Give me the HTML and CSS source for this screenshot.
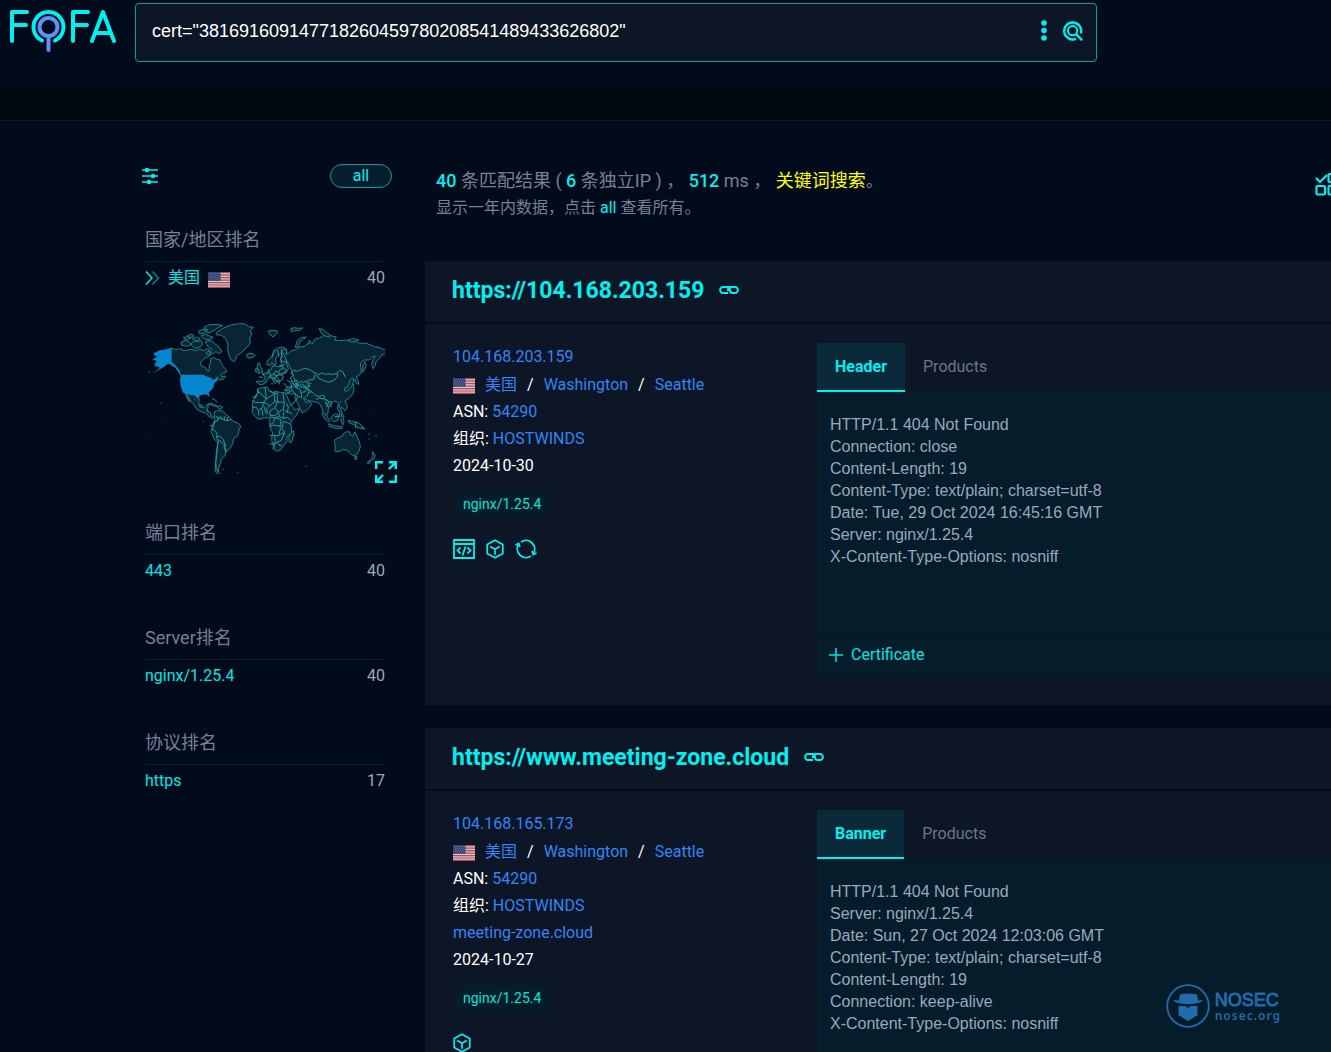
FILE: index.html
```html
<!DOCTYPE html>
<html lang="zh-CN">
<head>
  <meta charset="UTF-8">
  <meta name="viewport" content="width=device-width, initial-scale=1.0">
  <title>FOFA Search</title>
  <link rel="stylesheet" href="styles.css">
</head>
<body>
  <!-- shared icons -->
  <svg class="sprite" aria-hidden="true">
    <symbol id="flag-us" viewBox="0 0 22 16">
      <rect width="22" height="16" fill="#e9dfe4"/>
      <path d="M0 .6h22M0 3.1h22M0 5.6h22M0 8.1h22M0 10.6h22M0 13h22M0 15.4h22" stroke="#c1505c" stroke-width="1.2"/>
      <rect width="12.5" height="8.7" fill="#3c4a7c"/>
      <path d="M1 1.6h11M2 3.4h10M1 5.2h11M2 7h10" stroke="#8790b3" stroke-width=".7" stroke-dasharray="1 1"/>
    </symbol>
    <symbol id="icon-link" viewBox="0 0 20 10">
      <path d="M9 8H4a2.800 2.800 0 0 1-2.800-3A2.800 2.800 0 0 1 4 2h4.500Q11 2 11 5t2.500 3H16a2.800 2.800 0 0 0 2.800-3A2.800 2.800 0 0 0 16 2h-4.500Q9 2 9 5v1" fill="none" stroke="currentColor" stroke-width="2"/>
    </symbol>
    <symbol id="icon-cube" viewBox="0 0 18 20">
      <path d="M9 1.200l7.800 4.400v8.800L9 18.800l-7.800-4.400V5.600zM4.200 7.400L9 10.200l4.800-2.800M9 10.200v5.600" fill="none" stroke="currentColor" stroke-width="1.700"/>
    </symbol>
  </svg>

  <header class="header">
    <a class="logo" href="#" aria-label="FOFA">
      <svg width="108" height="44" viewBox="0 0 108 44" fill="none" stroke="#00f0f0" stroke-width="4" stroke-linecap="round" stroke-linejoin="round">
        <path d="M19 4H4v29M4 17h14"/>
        <path d="M34 32.500a15 15 0 1 1 13 0"/>
        <path d="M80 4H65v29M65 17h14"/>
        <path d="M84 33L95 4l11 29M88 25h14"/>
        <g stroke="#5b93f7"><circle cx="40.500" cy="19" r="9"/><path d="M40.500 28v14"/></g>
      </svg>
    </a>
    <form class="search">
      <input type="text" aria-label="Search query" value='cert="381691609147718260459780208541489433626802"'>
      <button type="button" class="icon-btn" aria-label="More options">
        <svg width="6" height="22" viewBox="0 0 6 22" fill="currentColor"><circle cx="3" cy="3" r="2.800"/><circle cx="3" cy="10.500" r="2.800"/><circle cx="3" cy="18" r="2.800"/></svg>
      </button>
      <button type="submit" class="icon-btn" aria-label="Search">
        <svg width="20" height="20" viewBox="0 0 20 20" fill="none" stroke="currentColor" stroke-width="2.400"><path d="M13 17.800A8.500 8.500 0 1 1 17.800 12.500"/><circle cx="9.600" cy="9.700" r="4.600" stroke-width="2"/><path d="M12.600 12.700l6.600 6.600"/></svg>
      </button>
    </form>
  </header>
  <div class="subbar"></div>

  <main class="main">
    <aside class="sidebar">
      <div class="filters">
        <button type="button" class="icon-btn" aria-label="Filters">
          <svg width="18" height="18" viewBox="0 0 18 18" stroke="currentColor" stroke-width="1.600" fill="currentColor"><path d="M1 3h16M1 9h16M1 15h16"/><g stroke="none"><circle cx="6" cy="3" r="2.300"/><circle cx="12" cy="9" r="2.300"/><circle cx="8" cy="15" r="2.300"/></g></svg>
        </button>
        <button type="button" class="all-btn">all</button>
      </div>

      <section class="rank">
        <h2>国家/地区排名</h2>
        <div class="rank-row">
          <a href="#">
            <svg class="chevrons" width="15" height="16" viewBox="0 0 15 16" fill="none" stroke="currentColor" stroke-width="1.500"><path d="M1 1.500L7 8l-6 6.500"/><path opacity=".55" d="M7.500 1.500l6 6.500-6 6.500"/></svg>
            美国
            <svg class="flag" width="22" height="16"><use href="#flag-us"/></svg>
          </a>
          <span>40</span>
        </div>
        <div class="map">
          <svg class="world" viewBox="15 36 720 456" role="img" aria-label="World map">
            <g class="land">
              <!-- North America -->
              <path d="M93 114l14 5 12-3 14 6 20-4 14 4 13-5 12 6 7-7 9 3-3 9 8 6-10 7-13 7-10 11 3 9 13 4 8 13 5-8-2-11 5-8-1-12 12-3 8 7 6-3 5 9 6 12 8 8 4 9-11 5-7 4 3 6 12-2-5 7-12 6-4-5-9 9-15 5-11-10-9-2H125l-3-12-8-14-9-12-12-4z"/>
              <path d="M139 249l14 4 12 2 7 9 6 2-2 12 4 13 11 3 7-7 8 1-5 9 1 8 9 1 1 10 9 4-3 5-11-6-10-10-13-4-14-8-11-16-9-11-4-10-6-8 5 14 5 10-8-8-6-18z"/>
              <path d="M202 283l10-3 14 5 7 4-11-1-9-4zM232 290l9-3 8 5-8 5-9-4z"/>
              <path d="M124 96l12-5 12 5 6 8-12 5-17-3zM130 83l14-3 9 5-14 5zM142 77l12-5 8 6-11 5zM152 102l10-9 14 2 8-3 4 12-10 8-15 3zM156 86l16-5 9 6-12 6zM176 63l14-5 9 5-8 7-13 1zM183 77l15-4 10 5 12 4-12 7-18-3zM192 52l15-7 22-2 19 3-13 7-13 8-11 7-12-1 4-9-10 1zM195 96l11-5 10 3 9 8 12 9 9 13-8 7-11-6-8 7-10-5 7-9-10-6zM198 127l11-3 3 7-10 4z"/>
              <path d="M229 68l18-12 25-11 27-4 18 1 8 8 16 2-10 9 4 12-6 11 2 15-7 10-10 8-7 9-15 10-9 19-9-5-8-16-3-19 1-12-7-18-13-9-16-2z"/>
              <path d="M318 135l9-5 13 1 5 6-8 6-13 1zM216 266l8 2 8 9M164 265l2 6"/>
              <!-- South America -->
              <path d="M222 307l11-6 14 2 10 9 14 12 7 9 18 8 6 7-6 15-3 15-12 7-3 16-10 17-11 8-2 11-11 10-3 14-5 13-2 11 9 9-9 1-9-12 3-28 3-26 2-33-10-8-10-23 3-13 7-8 2-16z"/>
              <!-- Africa -->
              <path d="M352 237l16-4 15-1 3 9 13 6 10-4 12 5 14-1 5 10 9 20 9 13 5 9 16-3-9 19-12 13-6 12 3 17-1 12-13 11-1 15-9 11-8 13-11 4-7-2-5-15-5-14 1-12 2-12-7-13-2-12 1-15-8-5-13 1-14 4-10-9-9-12 2-13-1-14 7-15 9-16z"/>
              <path d="M461 362l1 10-8 26-6-2-2-13 6-12z"/>
              <!-- Europe -->
              <path d="M348 214h20l8-10-4-7-6-5 11-3 7-8 10-3 2-8 9-3 9 3 15-2 3-8 7-2-2-15 4-12-2-14-12-6-15 3-10 11-8 16-12 12-1 11 10 3 6-10 3 9 8-4-1-16 8-10 7-7 5 9-7 14 9 3 10-1 6 23-8 12-13 1-9 6-7 2 10 12-5 5-13-14-10 2-7 6-8 10-9 5-10-2z"/>
              <path d="M352 163l6-5 3 12 5 7 2 9-14 4 4-8-6-8zM345 178l6-3 3 7-6 5zM393 221l7 1M376 211l3 7"/>
              <!-- Asia -->
              <path d="M424 119l9-2 8 8-5 7 9-1 8-9 12-2 14-9 17-2 5-8 7 1-1-12 10 12 7-14 15-4 12-7 20 0 18 4-5 10 16 1 17-2 16 5 16-1 10 7 17-2 16 6 14 6 18 4 14 6 9 6-11 4-11 4-7 10-9 9-5 16-5 6-4-12 4-14 7-12-9 2-9 10-16 0-10 9-1 13 3 9-5 14-11 6 6 11 3 11-8-3-3-10-10-4-5 9 10 9 1 17-6 14-12 12-10 6 8 13-1 10-7 6-6-9-6 1 1 13 9 13-4 2-9-12-1-21-6-13-8-3-9 8-10 13-1 15-7 13-9-18-4-14-6-10-15-5-19-3-14-8 8 14 12-3 5 6-6 11-12 11-11 5-6-11-7-18-9-16 4-13-14 3-11-4-6-9 5-9 19-2 13 2-4-13-8-11-3-17z"/>
              <path d="M466 112l6-20 12-9 15-2-9 7-10 7-5 15zM385 63l14-2 12 2 1 6-13 12-9-7zM452 57l10-4 12 2 14-1-9 7-15 1-9 3zM537 56l12 2 7 7 15 10-4 6-12-3-11-9zM626 89l13-3 17 4-8 5-16 1zM668 170l6-15 5 9-6 16-7 8zM612 235l9-3 5-10 5-14 8-4 2 9-5 14-9 12-11 6z"/>
              <!-- Oceania -->
              <path d="M549 307l8 8 13 17-4 4-12-10-8-15zM566 341l15 6 26 3-1 6-22-2-17-5zM575 319l12-8 11 6-6 16-12 2-7-7zM602 329l8-4 2 9-4 11zM624 331l13 3 17 4 11 8 8 11-13-3-9-1-8-9-15-5zM592 291l5-7 4 12 5 12-2 12-6-3 2-10-6-5zM601 279l1-6M664 348l10 7"/>
              <path d="M583 391l10-7 12-4 5-9 10-6 9 1 2 8 8 5 5-13 4 5 4 12 6 12 3 14-3 12-8 13-12 3-6-6-7-6-3-5-14-1-11 6-12-2 1-14zM643 440l8-1-3 11zM697 424l8 10-1 10-7 7-2-8 4-8zM693 449l-6 12-6-3z"/>
            </g>
            <g class="usa">
              <path d="M94 114v42l11 8 12 15 6 14-8-8-11-15-13-8-10 1-6 6-9 5-12 7-17 7 15-9 7-6-4-3-9-1-3-8 7-5-4-5-8-2 5-5 10-4-8-3-5-7 11-5 8-4 9-1z"/>
              <path d="M124 194h66l9 5 14 5 8 6 8-7 6-5-3 12-10 11-2 13-10 10-4 5 3 13-6-6-6-3-17 3-6 10-7-9-13-3-13-2-12-4-7-20-2-17z"/>
            </g>
            <!-- country borders -->
            <g class="borders">
              <path d="M209 348l10-3 1-9 12-3 3-10 9 2 13 7 16-2M232 333l4-10-8-4M220 345l-2 14 9 5 4 9-2 8 12-2 9 10 6 17-5 4 9 12M229 381l6 10-2 15-4 22-2 31 2 20 8 6M235 391l9 4 7 8 6 2M256 405l-2 12 4 10M242 318l3 10M253 319v12M263 321l-1 11"/>
              <path d="M352 237l5 9-13 13M337 262h11v-7l9-9 22 21-9 11-25-1-9-6M379 267l25-16v24l-14 12-11-7-9-2M375 233l4 34M388 243l16 8 2-5M406 251l6-3v28l-8-1M412 276l20 1M429 249l4 31M338 293l10-2 7 10 11-7 6-17M355 301l2 15M365 295l4 22M372 289l6 21M390 287l-10 10 2 16M412 276l-7 17-16 10 2 17M405 293l10 14-10 9-15 1M433 280l-3 19-14 7M430 299l12 8 3-16-6-11M442 307l8-1 6 8M416 307l2 13 11 5 2-18M429 325l14-3 9 10M418 320l-14 3-3 14-11 8M388 322h15M404 323l19 6-3 20-19-4-12 5M420 349l8 3 1-18M429 334l14 4 9 5M389 377h28l4-22 12 8-3 17M405 377v23l-7 18M388 402h17l7-6 12-5 5-14M412 396l8 12 7-2M420 375l8-7 8 5"/>
              <path d="M357 200l11 3M366 192l8 4M378 192l10-5-2-8M388 187l4 9-9 7M392 196l9-3 8 4-5 9-9 0M401 193l4-9 11 3 4-8M409 197l11-3 10 4-4 12-10 4 3 9M416 187l4 7M421 179l9-5-4-9-8 2M430 174l8 6-2 9-15 5M404 206l6 10 9-2M399 210l8 12M390 197l12 16M403 118l-7 25M412 120l5 20"/>
              <path d="M424 119l1 15-3 13 4 17M456 216l-4-12 6-8-5-7 7-8 13 3 12-6 12-3 14 5 11 8 8 1-6 6-2 12-17 4-14 6-7-3-8 4-9-9-5 8-7-4M532 195l15-6 9 4 12-2 9 3 14-4 2 9-10 11-16 7-16-5-15-7-6-9M591 190l8-8 9 2 8 18M441 211l12 7 2 13-10 5-5-7-8-9M455 231l1 10 12 14 13 7M456 218l13 8 2-7 8 7 7-5 9 8 14-2-8-9 13 2M469 226l-2 7 12 4 6 18-1 9M480 229l13 4 8 2 9-7M485 247l12-2 2-12 8 7-3 15-10 8M507 240l9 5 10 11 13 4 9-5 6 4-3 8-12-3-11 4M516 245l-7 3M551 267l8 2-2 13 9 1M559 269l7 6 8 0-3 11 5 6M566 276l-6 13 8 1M432 240l17 1M438 252l18-11M451 286l15-12 7-14M465 219l16 10M458 222l15 8M488 226l16 13"/>
              <path d="M647 335v19M584 320l14-1M166 197l2-3M189 289l-4 5M199 300l6-1M178 287l10-2"/>
            </g>
            <path class="isles" d="M61 278l4 3M61 328h1M31 367h1M25 387h1M24 186l5-1M188 334h4M248 478h4M291 487h4M497 469h4M665 353l8 5M687 370v5M686 386l4 2M706 378l5-1M711 108l4 2M643 300h1M694 315h1"/>
          </svg>
          <button type="button" class="icon-btn expand" aria-label="Expand map">
            <svg width="22" height="22" viewBox="0 0 22 22" fill="none" stroke="currentColor" stroke-width="2.400"><path d="M1.200 8V1.200H8M14 1.200h6.800V8M20.500 1.500L14 8M8 20.800H1.200V14M1.500 20.500L8 14M20.800 14v6.800H14"/></svg>
          </button>
        </div>
      </section>

      <section class="rank">
        <h2>端口排名</h2>
        <div class="rank-row"><a href="#">443</a><span>40</span></div>
      </section>
      <section class="rank">
        <h2>Server排名</h2>
        <div class="rank-row"><a href="#">nginx/1.25.4</a><span>40</span></div>
      </section>
      <section class="rank">
        <h2>协议排名</h2>
        <div class="rank-row"><a href="#">https</a><span>17</span></div>
      </section>
    </aside>

    <div class="results">
      <div class="summary">
        <div>
          <p class="total"><b>40</b> 条匹配结果 ( <b>6</b> 条独立IP ) ， <b>512</b> ms ， <a href="#">关键词搜索</a>。</p>
          <p class="hint">显示一年内数据，点击 <a href="#">all</a> 查看所有。</p>
        </div>
        <button type="button" class="icon-btn batch" aria-label="Select results">
          <svg width="24" height="24" viewBox="0 0 24 24" fill="none" stroke="currentColor" stroke-width="2.200"><path d="M1 6l4 4 7-7"/><rect x="13.500" y="2" width="8.500" height="8" rx="1"/><rect x="1.500" y="14" width="8.500" height="8.500" rx="1"/><rect x="13.500" y="14" width="8.500" height="8.500" rx="1"/></svg>
        </button>
      </div>

      <article class="card">
        <h3 class="card-title">
          <a href="#">https://104.168.203.159</a>
          <svg width="20" height="10"><use href="#icon-link"/></svg>
        </h3>
        <div class="card-body">
          <div class="info">
            <p><a href="#">104.168.203.159</a></p>
            <p class="place">
              <svg class="flag" width="22" height="16"><use href="#flag-us"/></svg>
              <a href="#">美国</a><span>/</span><a href="#">Washington</a><span>/</span><a href="#">Seattle</a>
            </p>
            <p>ASN: <a href="#">54290</a></p>
            <p>组织: <a href="#">HOSTWINDS</a></p>
            <p>2024-10-30</p>
            <a class="tag" href="#">nginx/1.25.4</a>
            <div class="actions">
              <button type="button" class="icon-btn" aria-label="Page source">
                <svg width="22" height="20" viewBox="0 0 22 20" fill="none" stroke="currentColor" stroke-width="1.800"><path d="M1 1h20v18H1zM1 5h20M7.500 8.500l-3 3 3 3M14.500 8.500l3 3-3 3M12.500 7.500l-3 9"/></svg>
              </button>
              <button type="button" class="icon-btn" aria-label="Products">
                <svg width="18" height="20"><use href="#icon-cube"/></svg>
              </button>
              <button type="button" class="icon-btn" aria-label="Refresh">
                <svg width="22" height="20" viewBox="0 0 22 20" fill="none" stroke="currentColor" stroke-width="1.800"><path d="M6 3A8.700 8.700 0 0 1 18.500 14.500M16 17A8.700 8.700 0 0 1 3.500 5.500"/><path d="M.5 6l3.200-1.500L5 8M21.500 14l-3.200 1.500L17 12"/></svg>
              </button>
            </div>
          </div>
          <div class="detail">
            <div class="tabs">
              <button type="button" class="tab active">Header</button>
              <button type="button" class="tab">Products</button>
            </div>
            <pre class="panel">HTTP/1.1 404 Not Found
Connection: close
Content-Length: 19
Content-Type: text/plain; charset=utf-8
Date: Tue, 29 Oct 2024 16:45:16 GMT
Server: nginx/1.25.4
X-Content-Type-Options: nosniff</pre>
            <button type="button" class="cert">
              <svg width="14" height="14" viewBox="0 0 14 14" stroke="currentColor" stroke-width="1.500"><path d="M7 0v14M0 7h14"/></svg>
              Certificate
            </button>
          </div>
        </div>
      </article>

      <article class="card">
        <h3 class="card-title">
          <a href="#">https://www.meeting-zone.cloud</a>
          <svg width="20" height="10"><use href="#icon-link"/></svg>
        </h3>
        <div class="card-body">
          <div class="info">
            <p><a href="#">104.168.165.173</a></p>
            <p class="place">
              <svg class="flag" width="22" height="16"><use href="#flag-us"/></svg>
              <a href="#">美国</a><span>/</span><a href="#">Washington</a><span>/</span><a href="#">Seattle</a>
            </p>
            <p>ASN: <a href="#">54290</a></p>
            <p>组织: <a href="#">HOSTWINDS</a></p>
            <p><a href="#">meeting-zone.cloud</a></p>
            <p>2024-10-27</p>
            <a class="tag" href="#">nginx/1.25.4</a>
            <div class="actions">
              <button type="button" class="icon-btn" aria-label="Products">
                <svg width="18" height="20"><use href="#icon-cube"/></svg>
              </button>
            </div>
          </div>
          <div class="detail">
            <div class="tabs">
              <button type="button" class="tab active">Banner</button>
              <button type="button" class="tab">Products</button>
            </div>
            <pre class="panel">HTTP/1.1 404 Not Found
Server: nginx/1.25.4
Date: Sun, 27 Oct 2024 12:03:06 GMT
Content-Type: text/plain; charset=utf-8
Content-Length: 19
Connection: keep-alive
X-Content-Type-Options: nosniff</pre>
          </div>
        </div>
      </article>
    </div>
  </main>

  <div class="nosec">
    <svg width="44" height="44" viewBox="0 0 44 44">
      <circle cx="22" cy="22" r="20.800" fill="none" stroke="currentColor" stroke-width="1.800"/>
      <path fill="currentColor" d="M13 16.500l1-6q8-2 17 0l1 6 5-.5q-2 3-8 3.500-7 1-14 0-6-.5-8-3.500zM12.500 22q4 0 7 0l2.500 2 2.500-2q4 0 7 0v9q-4 3-9.500 6-5.500-3-9.500-6z"/>
    </svg>
    <div>
      <strong>NOSEC</strong>
      <span>nosec.org</span>
    </div>
  </div>
</body>
</html>
```
FILE: styles.css
```css
* {
  box-sizing: border-box;
}
body {
  margin: 0;
  height: 100vh;
  overflow: hidden;
  background: #020b1c;
  color: #fff;
  font-family: Roboto, "Noto Sans CJK SC", sans-serif;
  font-size: 16px;
}
h2, h3, p, pre {
  margin: 0;
}
a {
  color: inherit;
  text-decoration: none;
}
svg {
  display: block;
  flex-shrink: 0;
}
button {
  font: inherit;
  cursor: pointer;
}
.sprite {
  position: absolute;
  width: 0;
  height: 0;
}
.icon-btn {
  padding: 0;
  border: 0;
  background: none;
  color: #00f0f0;
}

/* top bar */
.header {
  display: flex;
  align-items: flex-start;
  height: 86px;
  padding: 3px 5px 0 8px;
}
.logo {
  width: 127px;
  padding-top: 5px;
}
.search {
  display: flex;
  align-items: center;
  gap: 16px;
  width: 73%;
  height: 59px;
  padding: 0 13px 3px 16px;
  background: #0d1626;
  border: 1px solid #079ca5;
  border-radius: 4px;
}
.search input {
  flex: 1;
  min-width: 0;
  padding: 0;
  border: 0;
  outline: 0;
  background: none;
  color: #fff;
  font: 18px "Liberation Sans", sans-serif;
}
.subbar {
  height: 35px;
  background: #020913;
  border-bottom: 1px solid #041d29;
}
.main {
  display: grid;
  grid-template-columns: 240px minmax(0, 1fr);
  gap: 40px;
  padding: 43px 0 0 145px;
}

/* left column */
.filters {
  display: flex;
  justify-content: space-between;
  align-items: center;
  margin: 0 -7px 31px -4px;
}
.all-btn {
  width: 62px;
  height: 24px;
  padding: 0;
  border: 1px solid #079ca5;
  border-radius: 12px;
  background: #051d2d;
  color: #00f0f0;
  line-height: 22px;
}
.rank {
  margin-bottom: 30px;
}
.rank h2 {
  border-bottom: 1px solid #071f2c;
  color: #748194;
  font-size: 18px;
  font-weight: 400;
  line-height: 42px;
}
.rank-row {
  display: flex;
  justify-content: space-between;
  line-height: 32px;
  color: #9aa8bd;
}
.rank-row a {
  display: flex;
  align-items: center;
  gap: 8px;
  color: #00e5e5;
}
.flag {
  position: relative;
  top: 2px;
  opacity: .9;
}
.map {
  position: relative;
  margin-top: 28px;
  padding-bottom: 8px;
}
.world {
  width: 100%;
}
.land {
  fill: #092433;
  stroke: #1a828a;
  stroke-width: 3;
  stroke-linejoin: round;
}
.usa {
  fill: #0586cf;
}
.borders {
  fill: none;
  stroke: #229aa0;
  stroke-width: 3;
}
.isles {
  stroke: #16737c;
  stroke-width: 3;
}
.expand {
  position: absolute;
  right: -12px;
  bottom: -1px;
}

/* results */
.summary {
  display: flex;
  justify-content: space-between;
  align-items: flex-start;
  padding: 3px 0 40px 11px;
  line-height: 27px;
  color: #748194;
}
.total {
  font-size: 18px;
}
.total b {
  color: #00f0f0;
  font-weight: 500;
}
.total a {
  color: #ff0;
}
.hint a {
  color: #00f0f0;
}
.batch {
  margin: 5px -8px 0 0;
}
.card {
  margin-bottom: 23px;
}
.card-title {
  display: flex;
  align-items: center;
  gap: 15px;
  height: 61px;
  padding: 0 0 3px 27px;
  background: #0d1626;
  color: #00f0f0;
  font-size: 23px;
  font-weight: 700;
}
.card-body {
  display: grid;
  grid-template-columns: 364px minmax(0, 1fr);
  margin-top: 2px;
  padding: 19px 0 30px 28px;
  background: #0d1626;
}
.info p {
  line-height: 27px;
}
.info p a {
  color: #3584f5;
}
.info .place {
  display: flex;
  align-items: center;
  gap: 10px;
  height: 28px;
}
.tag {
  display: inline-block;
  margin-top: 12px;
  padding: 0 10px;
  border-radius: 13px;
  background: #051d2a;
  color: #00e5d8;
  font-size: 14px;
  line-height: 26px;
}
.actions {
  display: flex;
  gap: 11px;
  margin-top: 22px;
}
.tabs {
  display: flex;
}
.tab {
  height: 49px;
  padding: 0 18px;
  border: 0;
  border-bottom: 2px solid transparent;
  background: none;
  color: #69778a;
}
.tab.active {
  border-color: #00f0f0;
  background: #0b2a39;
  color: #00f0f0;
  font-weight: 700;
}
.panel {
  min-height: 240px;
  padding: 22px 13px;
  background: #051d2b;
  color: #9aa8bd;
  font: 16px/22px "Liberation Sans", sans-serif;
}
.cert {
  display: flex;
  align-items: center;
  gap: 8px;
  width: 100%;
  height: 41px;
  margin-top: 2px;
  padding: 0 12px;
  border: 0;
  background: #051d2b;
  color: #00e5e5;
}

/* watermark */
.nosec {
  position: fixed;
  right: 50px;
  bottom: 24px;
  display: flex;
  align-items: center;
  gap: 5px;
  color: #216cac;
}
.nosec strong, .nosec span {
  display: block;
}
.nosec strong {
  font: 18px/20px "Liberation Sans", sans-serif;
  -webkit-text-stroke: 1px;
}
.nosec span {
  font: 600 12px/12px "Noto Sans", sans-serif;
  letter-spacing: 1px;
}
```
